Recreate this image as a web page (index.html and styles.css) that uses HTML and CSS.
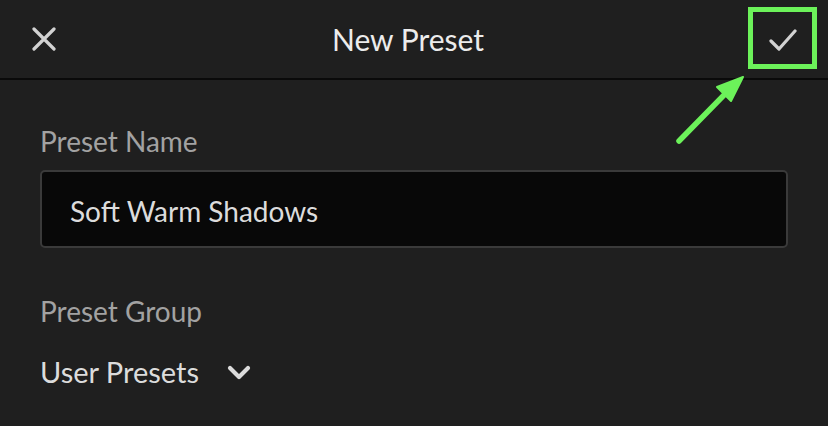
FILE: index.html
```html
<!DOCTYPE html>
<html lang="en">
<head>
    <meta charset="UTF-8">
    <meta name="viewport" content="width=device-width, initial-scale=1.0">
    <title>New Preset</title>
    <link rel="stylesheet" href="styles.css">
</head>
<body>
    <!-- Top bar -->
    <header class="topbar">
        <button class="icon-btn close-btn" aria-label="Close">
            <svg width="24" height="24" viewBox="0 0 24 24">
                <path d="M2 2 L22 22 M22 2 L2 22" stroke="#d2d2d2" stroke-width="3.2" stroke-linecap="round" fill="none"/>
            </svg>
        </button>
        <h1 class="title">New Preset</h1>
        <button class="icon-btn done-btn" aria-label="Done">
            <svg width="28" height="24" viewBox="0 0 28 24">
                <path d="M2 13 L10 21 L26 3" stroke="#d2d2d2" stroke-width="3.2" stroke-linecap="round" stroke-linejoin="round" fill="none"/>
            </svg>
        </button>
    </header>

    <!-- Form -->
    <form class="preset-form" onsubmit="return false;">
        <label class="field-label" for="presetName">Preset Name</label>
        <input class="text-input" type="text" id="presetName" value="Soft Warm Shadows">

        <div class="field-label group-label">Preset Group</div>
        <div class="select-row">
            <span class="select-value">User Presets</span>
            <svg class="chevron" width="24" height="16" viewBox="0 0 24 16">
                <path d="M3 3 L12 12 L21 3" stroke="#dcdcdc" stroke-width="4.2" stroke-linecap="round" stroke-linejoin="round" fill="none"/>
            </svg>
        </div>
    </form>

    <!-- Tutorial highlight over the done button -->
    <div class="highlight-box"></div>
    <svg class="highlight-arrow" width="828" height="426" viewBox="0 0 828 426">
        <path d="M679 141 L726 93" stroke="#6cf25a" stroke-width="5.5" stroke-linecap="round" fill="none"/>
        <path d="M743 77 L717 87 L731 101 Z" fill="#6cf25a" stroke="#6cf25a" stroke-width="2" stroke-linejoin="round"/>
    </svg>
</body>
</html>
```

FILE: styles.css
```css
/* Dark preset dialog */
body {
    margin: 0;
    background-color: #1f1f1f;
    font-family: Lato, "Open Sans", sans-serif;
    color: #dcdcdc;
}

.topbar {
    display: grid;
    grid-template-columns: 1fr auto 1fr;
    align-items: center;
    height: 78px;
    border-bottom: 2px solid #0a0a0a;
}

.icon-btn {
    background: none;
    border: none;
    padding: 0;
    display: flex;
}

.close-btn {
    justify-self: start;
    margin-left: 32px;
}

.done-btn {
    justify-self: end;
    margin-right: 31px;
    margin-top: 2px;
}

.title {
    margin: 0 12px 0 0;
    font-size: 30px;
    font-weight: 400;
    line-height: 34px;
    color: #ececec;
}

.preset-form {
    display: flex;
    flex-direction: column;
    padding: 44px 40px 0 40px;
}

.field-label {
    font-size: 28px;
    line-height: 34px;
    color: #a2a2a2;
    margin-bottom: 12px;
}

.text-input {
    box-sizing: border-box;
    width: 100%;
    height: 78px;
    padding: 4px 28px 0 28px;
    background-color: #080808;
    border: 2px solid #3a3a3a;
    border-radius: 5px;
    font-family: inherit;
    font-size: 28px;
    color: #dcdcdc;
    outline: none;
}

.group-label {
    margin-top: 46px;
    margin-bottom: 27px;
}

.select-row {
    display: flex;
    align-items: center;
    gap: 28px;
}

.select-value {
    font-size: 29px;
    line-height: 34px;
}

.chevron {
    margin-top: 2px;
}

.highlight-box {
    position: absolute;
    left: 748px;
    top: 7px;
    width: 59px;
    height: 52px;
    border: 5px solid #6cf25a;
}

.highlight-arrow {
    position: absolute;
    left: 0;
    top: 0;
    pointer-events: none;
}
```
